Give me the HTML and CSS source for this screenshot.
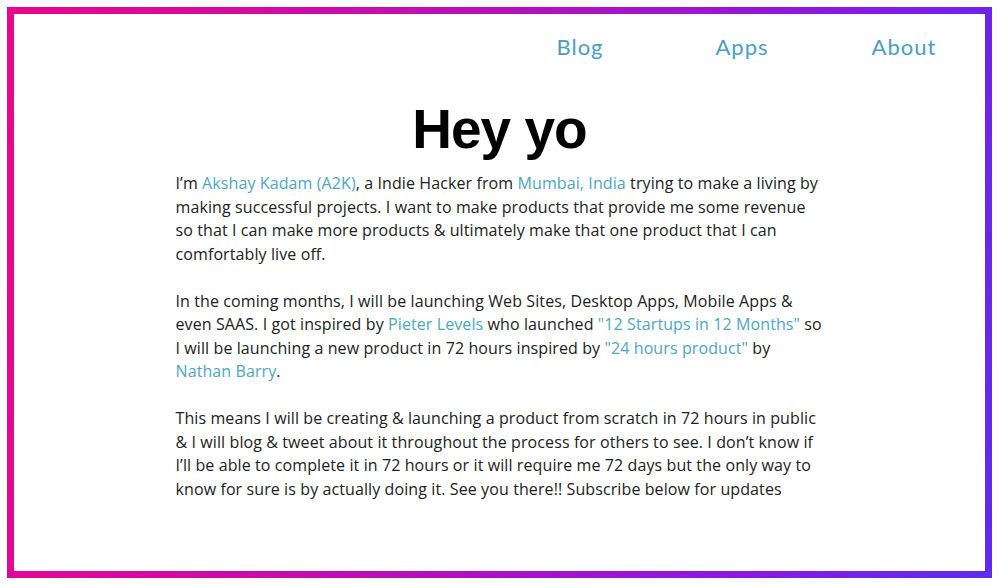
FILE: index.html
```html
<!DOCTYPE html>
<html>
<head>
  <title>Hey yo</title>
  <link rel="stylesheet" href="styles.css">
</head>
<body>
  <div class="frame">
    <nav class="nav">
      <a href="#">Blog</a>
      <a href="#">Apps</a>
      <a href="#">About</a>
    </nav>

    <div class="content">
      <h1>Hey yo</h1>

      <p>I’m <a href="#">Akshay Kadam (A2K)</a>, a Indie Hacker from <a href="#">Mumbai, India</a> trying to make a living by making successful projects. I want to make products that provide me some revenue so that I can make more products &amp; ultimately make that one product that I can comfortably live off.</p>

      <p>In the coming months, I will be launching Web Sites, Desktop Apps, Mobile Apps &amp; even SAAS. I got inspired by <a href="#">Pieter Levels</a> who launched <a href="#">"12 Startups in 12 Months"</a> so I will be launching a new product in 72 hours inspired by <a href="#">"24 hours product"</a> by <a href="#">Nathan Barry</a>.</p>

      <p>This means I will be creating &amp; launching a product from scratch in 72 hours in public &amp; I will blog &amp; tweet about it throughout the process for others to see. I don’t know if I’ll be able to complete it in 72 hours or it will require me 72 days but the only way to know for sure is by actually doing it. See you there!! Subscribe below for updates</p>
    </div>
  </div>
</body>
</html>
```

FILE: styles.css
```css
html, body {
  margin: 0;
  background-color: #fff;
}

body {
  padding: 7px 8px 8px 7px;
  font-family: "Open Sans", Lato, sans-serif;
  color: #222;
}

.frame {
  box-sizing: border-box;
  height: 571px;
  border: 7px solid #c0c;
  border-image: linear-gradient(100deg, #ec058c 0%, #c00eb4 40%, #8a18e2 78%, #5e2bee 100%) 1;
  overflow: hidden;
}

.nav {
  display: grid;
  grid-template-columns: repeat(3, 162px);
  justify-content: end;
  padding-top: 22px;
}

.nav a {
  text-align: center;
  font-family: Lato, sans-serif;
  font-size: 22px;
  line-height: 22px;
  letter-spacing: 1px;
  color: #4a9fc0;
  text-decoration: none;
}

.content {
  width: 648px;
  margin: 0 auto;
}

h1 {
  margin: 39px 0 11px;
  text-align: center;
  font-family: "Liberation Sans", Arial, sans-serif;
  font-size: 55px;
  line-height: 64px;
  letter-spacing: -1px;
  color: #000;
}

p {
  margin: 0 0 23.5px;
  font-size: 16px;
  line-height: 23.5px;
  letter-spacing: 0.1px;
}

p a {
  color: #4ea6c4;
  text-decoration: none;
}
```
